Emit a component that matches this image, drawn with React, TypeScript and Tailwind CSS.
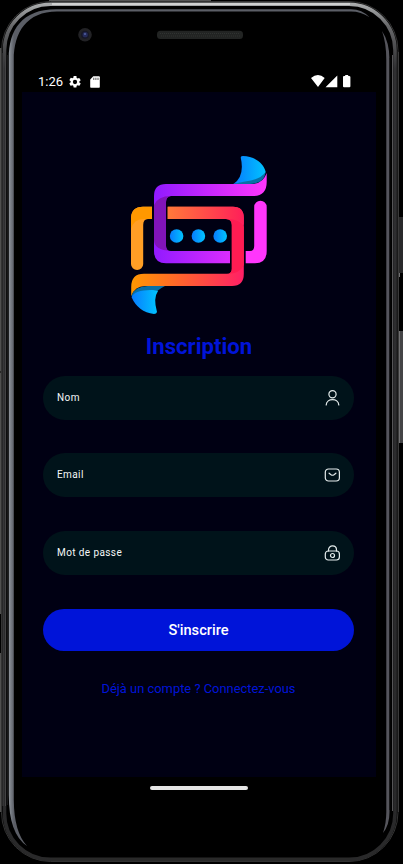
import React from "react";

function PhoneFrame() {
  return (
    <svg className="pointer-events-none absolute inset-0" width="403" height="864" viewBox="0 0 403 864" fill="none">
      <defs>
        <linearGradient id="rim" x1="0" y1="0" x2="0" y2="864" gradientUnits="userSpaceOnUse">
          <stop offset="0" stopColor="#b5b7b8" />
          <stop offset="0.03" stopColor="#68696b" />
          <stop offset="0.08" stopColor="#303032" />
          <stop offset="1" stopColor="#29292a" />
        </linearGradient>
        <linearGradient id="leftRim" x1="8.5" y1="0" x2="14" y2="0" gradientUnits="userSpaceOnUse">
          <stop offset="0" stopColor="#969ba1" />
          <stop offset="0.45" stopColor="#787d85" />
          <stop offset="1" stopColor="#5b5e66" />
        </linearGradient>
      </defs>
      <path d="M0 48H2V812H0Z" fill="#50504f" />
      <path d="M0 372H2" stroke="#000" />
      <path d="M0 614H1V653H0Z" fill="#000" />
      <path d="M49 .5H211" stroke="#555" />
      <path d="M399 217H403V273H399Z" fill="#29292a" />
      <path d="M399 331H403V443H399Z" fill="#444446" />
      <path d="M399.5 331V443M399.5 273V277" stroke="#707071" />
      <rect x="1.5" y="1.5" width="396.5" height="860" rx="49" fill="#000" stroke="#343434" />
      <rect x="4.5" y="4.2" width="390.5" height="855.2" rx="46" stroke="url(#rim)" strokeWidth="3.6" />
      <path d="M3 53V806M5.5 53V806" stroke="#434344" />
      <path d="M7.5 55V805" stroke="#171718" />
      <path d="M8.8 795V58C8.8 30 22 9.2 56 9.2H351Q362 9.2 369.5 17.3Q361 11.6 351 11.6H57C27 11.6 13.8 32 13.8 60V800Q14 832 27 846Q8.8 834 8.8 795Z" fill="url(#leftRim)" />
      <path d="M382 31Q389.5 42 389.5 60V812Q389.5 825 383 833Q386.3 823 386.3 812V60Q386.3 43 382 31Z" fill="#55555c" />
      <path d="M390 58V810" stroke="#080809" />
      <path d="M392.5 55V811" stroke="#555557" />
      <path d="M398.5 52V812" stroke="#3a3a3a" />
      <path d="M52 4H350" stroke="#d0d1d1" strokeWidth="2" />
      <path d="M52 859.5H350" stroke="#292929" strokeWidth="3" />
      <rect x="157" y="30.7" width="86" height="8.3" rx="3.5" fill="#222423" />
      <path d="M160 33.5H240M161 36H240" stroke="#303331" strokeDasharray="1 1" />
      <circle cx="85" cy="34.7" r="6.8" fill="#222225" />
      <circle cx="85" cy="34.7" r="4" fill="#171827" />
      <circle cx="85.2" cy="34.7" r="2.6" fill="#252b59" />
      <circle cx="85" cy="34" r="1" fill="#5362a2" />
    </svg>
  );
}

function Logo() {
  return (
    <svg width="137" height="160" viewBox="130 155 137 160" fill="none" className="shrink-0">
      <defs>
        <linearGradient id="violet" x1="154" y1="0" x2="267" y2="0" gradientUnits="userSpaceOnUse">
          <stop stopColor="#911aff" />
          <stop offset="1" stopColor="#ff36fc" />
        </linearGradient>
        <linearGradient id="warm" x1="131" y1="0" x2="244" y2="0" gradientUnits="userSpaceOnUse">
          <stop stopColor="#ff9800" />
          <stop offset="1" stopColor="#ff1f66" />
        </linearGradient>
        <linearGradient id="warmTop" x1="168" y1="0" x2="244" y2="0" gradientUnits="userSpaceOnUse">
          <stop stopColor="#ff793a" />
          <stop offset="1" stopColor="#ff1e59" />
        </linearGradient>
        <linearGradient id="blue" x1="0" x2="1" y1="0" y2="0">
          <stop stopColor="#087bfd" />
          <stop offset="1" stopColor="#00c4ff" />
        </linearGradient>
      </defs>
      <path d="M154 196Q154 184 166 184H251Q263 184 266.7 173V182Q266.7 196 253 196H171Q166 196 166 202V246Q166 251 171 251H230V263.3H166Q154 263.3 154 251Z" fill="url(#violet)" />
      <path d="M154 205Q158 196 171 196Q166 197 166 202V246Q166 251 171 251Q154 250 154 240Z" fill="#8114b9" />
      <path d="M254.2 207A6.2 6.2 0 0 1 266.7 207V251Q266.7 263.3 255 263.3H245.7V251H250Q254.2 251 254.2 246Z" fill="#ff36fc" />
      <path d="M131 219Q131 206.8 143 206.8H152V219H148Q143.2 219 143.2 225V264A6.1 6.1 0 0 1 131 264Z" fill="#ff9e25" />
      <path d="M131 219Q131 206.8 143 206.8H152V219H143Q134 219 131 229Z" fill="#ff9800" />
      <path d="M167.7 206.8H233Q243.8 206.8 243.8 218V274Q243.8 286 232 286H145Q135 286 131.2 296V287Q131.2 273.8 144 273.8H227Q231.8 273.8 231.8 269V225Q231.8 219 226 219H167.7Z" fill="url(#warm)" />
      <path d="M167.7 206.8H233Q243.8 206.8 243.8 218V225Q241 219 226 219H167.7Z" fill="url(#warmTop)" />
      <path d="M226 219Q241 219 243.8 227V265Q240 273.8 227 273.8Q231.8 273.8 231.8 269V225Q231.8 219 226 219Z" fill="#ff1c52" />
      <path d="M233 184H250Q264 184 265.8 172Q258 179 246 180.5Z" fill="#0870a6" />
      <path d="M240.7 157.4Q241 156 243 156C254 156 264 163 265.7 172Q260 180 245 181.5L233.5 184Q245 176 240.7 157.4Z" fill="url(#blue)" />
      <path d="M131.3 296Q135 286 148 286H165Q157 290 154 295Z" fill="#0870a6" />
      <path d="M131.5 297Q135 289.5 153 290L158 291Q153 298 157 312Q156.5 314 154 314Q138 312 131.5 297Z" fill="url(#blue)" />
      {[176.6, 198.4, 220.2].map((x) => <circle key={x} cx={x} cy="236" r="6.8" fill="url(#blue)" />)}
    </svg>
  );
}

function FieldIcon({ name }: { name: string }) {
  return (
    <svg width="16" height="16" viewBox="0 0 16 16" fill="none" stroke="#e4ecec" strokeWidth="1.2" strokeLinecap="round">
      {name === "user" && <><circle cx="8.5" cy="4.2" r="3.6" /><path d="M2.2 15C2.5 7.8 14.5 7.8 14.8 15" /></>}
      {name === "mail" && <><rect x="1.3" y="2" width="14.1" height="12" rx="3.2" /><path d="M5.1 6.2 7 7.7Q8.5 8.8 10 7.7L11.9 6.2" /></>}
      {name === "lock" && <><path d="M4.5 6V5C4.5-.4 12.5-.4 12.5 5V6" /><rect x="1.3" y="6" width="14.1" height="9" rx="3" /><circle cx="8.5" cy="10.5" r="2" /></>}
    </svg>
  );
}

function Field({ label, icon }: { label: string; icon: string }) {
  return (
    <label className="flex h-[44px] items-center justify-between rounded-full bg-[#00131a] px-[14px] text-[10px] leading-3 tracking-[0.4px] text-[#f4f7f7]">
      <span>{label}</span>
      <FieldIcon name={icon} />
    </label>
  );
}

export default function App() {
  return (
    <div className="relative h-[864px] w-[403px] overflow-hidden bg-black font-['Roboto',sans-serif]">
      <PhoneFrame />
      <div className="relative flex h-full flex-col pr-[27px] pl-[22px] pt-[70px]">
        <header className="flex h-[22px] shrink-0 items-center justify-between pr-[24px] pl-4 text-white">
          <div className="flex items-center pt-[2px]">
            <span className="w-[25px] text-[13px] leading-4 whitespace-nowrap">1:26</span>
            <svg className="ml-[5.5px]" width="12" height="12" viewBox="2 2 20 20" fill="white">
              <path d="M19.14 12.94c.04-.3.06-.61.06-.94s-.02-.64-.07-.94l2.03-1.58a.49.49 0 0 0 .12-.61l-1.92-3.32a.49.49 0 0 0-.59-.22l-2.39.96a7 7 0 0 0-1.62-.94l-.36-2.54A.48.48 0 0 0 13.92 2h-3.84a.48.48 0 0 0-.48.41l-.36 2.54a7 7 0 0 0-1.62.94l-2.39-.96a.48.48 0 0 0-.59.22L2.72 8.47a.48.48 0 0 0 .12.61l2.03 1.58a6 6 0 0 0 0 1.88l-2.03 1.58a.49.49 0 0 0-.12.61l1.92 3.32c.12.22.37.29.59.22l2.39-.96c.5.38 1.03.7 1.62.94l.36 2.54c.05.24.24.41.48.41h3.84c.24 0 .44-.17.47-.41l.36-2.54a7 7 0 0 0 1.63-.94l2.39.96c.22.08.47 0 .59-.22l1.92-3.32a.49.49 0 0 0-.12-.61ZM12 15.6A3.6 3.6 0 1 1 12 8.4a3.6 3.6 0 0 1 0 7.2Z" />
            </svg>
            <svg className="mb-px ml-[9px]" width="10" height="12" viewBox="0 0 10 12"><path d="M3.3.3H9Q9.8.3 9.8 1.2V11Q9.8 11.8 9 11.8H1Q.2 11.8.2 11V3.5Z" fill="white" /><path d="M3.8 1.7V4M5.9 1.7V4M8 1.7V4" stroke="#222" strokeWidth=".8" /></svg>
          </div>
          <svg width="41" height="14" viewBox="0 0 41 14" fill="white">
            <path d="M0 4Q7-1.8 13.7 4L7 13ZM14.5 13.2H26.3V1.5ZM32 3Q32 2 33 2H34.2V1H37.2V2H38Q39.4 2 39.4 3V12.3Q39.4 13.3 38.4 13.3H33Q32 13.3 32 12.3Z" />
          </svg>
        </header>
        <main className="flex h-[685px] shrink-0 flex-col items-center bg-[#000013] pt-[63px] pr-px">
          <Logo />
          <h1 className="mt-[17px] h-[28px] pl-px text-[22.1px] leading-[28px] font-bold whitespace-nowrap text-[#0014d9]">Inscription</h1>
          <form className="mt-[16px] flex w-[311px] flex-col" onSubmit={(event) => event.preventDefault()}>
            <div className="flex flex-col gap-[33.4px]">
              <Field label="Nom" icon="user" />
              <Field label="Email" icon="mail" />
              <Field label="Mot de passe" icon="lock" />
            </div>
            <button className="mt-[34px] h-[42.6px] rounded-full bg-[#0014d9] pt-px text-[14.6px] font-medium text-white">S'inscrire</button>
          </form>
          <a className="mt-[28.5px] text-[12.9px] leading-[18px] whitespace-nowrap text-[#0014d9]">Déjà un compte ? Connectez-vous</a>
        </main>
        <div className="mt-[9px] h-[4px] w-[98px] self-center rounded-sm bg-[#e5e5e5]" />
      </div>
    </div>
  );
}
